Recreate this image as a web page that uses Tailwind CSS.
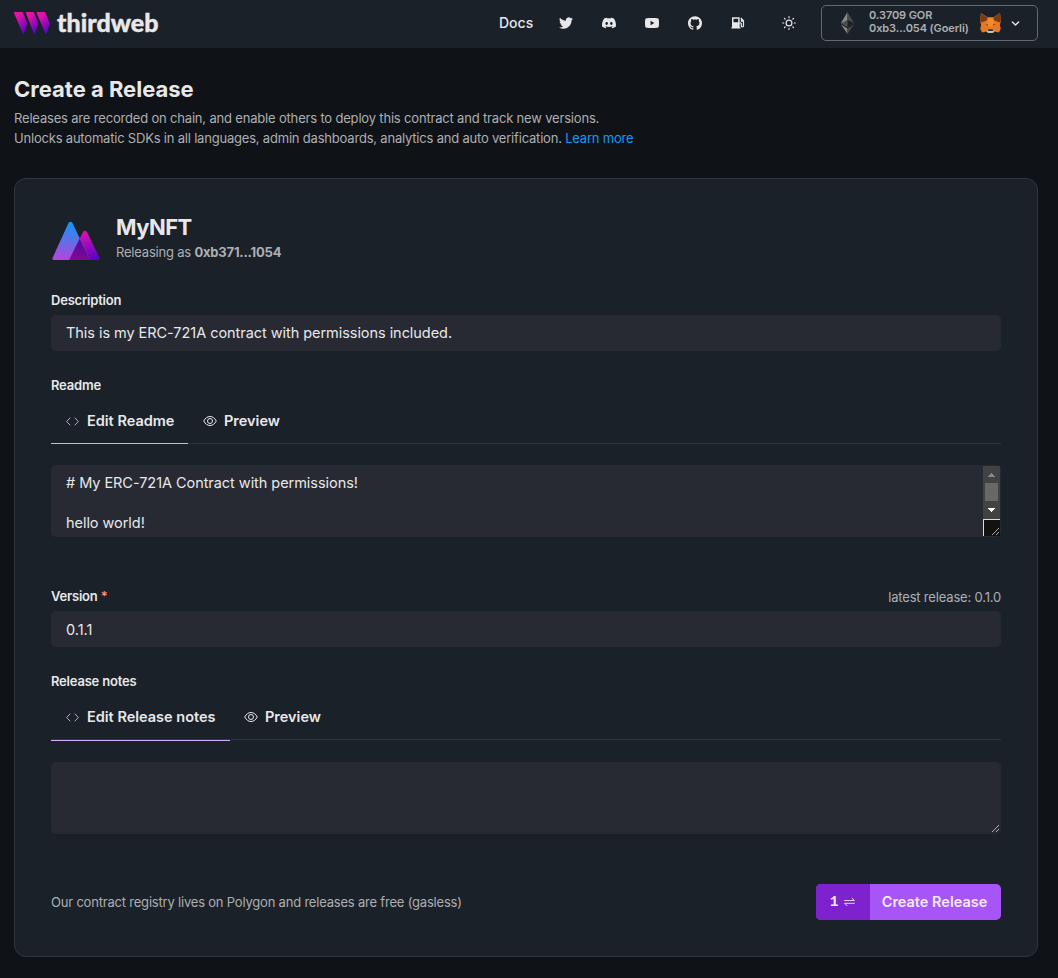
<!DOCTYPE html>
<html lang="en">
<head>
<meta charset="utf-8">
<title>Create a Release | thirdweb</title>
<script src="https://cdn.jsdelivr.net/npm/@tailwindcss/browser@4"></script>
</head>
<body class="h-[978px] overflow-hidden bg-[#0f1318] font-[Inter,sans-serif] text-[#e8e8ea]">
<header class="flex h-12 items-center bg-[#1b2129] pl-[14px] pr-5">
  <div class="flex items-center gap-[7px] pb-[2px]">
    <svg class="h-[22px] w-9" viewBox="0 0 36 22">
      <defs><linearGradient id="logo" x1="0" y1="0" x2=".6" y2="1"><stop offset="0" stop-color="#f213a4"/><stop offset=".3" stop-color="#e012a6"/><stop offset="1" stop-color="#5a04c4"/></linearGradient></defs>
      <path fill="url(#logo)" d="M1 0H7.800Q8.800 0 9.200 1L13.200 11.200Q13.500 12 13.200 12.800L10.200 21Q9.500 22.500 8.700 21L.1 1.300Q-.3 0 1 0Z"/>
      <path fill="url(#logo)" d="M13 0H18.800Q19.800 0 20.200 1L24.200 11.200Q24.500 12 24.200 12.800L21.200 21Q20.500 22.500 19.700 21L12 1.300Q11.500 0 13 0Z"/>
      <path fill="url(#logo)" d="M23.800 0H30.200Q31.200 0 31.600 1L35.700 11.200Q36 12 35.700 12.800L32.700 21Q32 22.500 31.200 21L22.700 1.300Q22.300 0 23.800 0Z"/>
    </svg>
    <span class="w-[102px] whitespace-nowrap pb-[2px] font-[Lato,sans-serif] text-[25px] font-black leading-6 tracking-[0.05px] [-webkit-text-stroke:0.4px_#e8e8ea]">thirdweb</span>
  </div>
  <nav class="ml-auto flex items-center pb-[2px]">
    <a class="mr-[26px] w-[34px] whitespace-nowrap text-[14px] font-medium leading-5">Docs</a>
    <div class="flex items-center gap-[29px]">
      <svg class="size-[14px]" viewBox="0 0 24 24" fill="currentColor"><path d="M23.953 4.570a10 10 0 01-2.825.775 4.958 4.958 0 002.163-2.723c-.951.555-2.005.959-3.127 1.184a4.920 4.920 0 00-8.384 4.482C7.690 8.095 4.067 6.130 1.640 3.162a4.822 4.822 0 00-.666 2.475c0 1.710.870 3.213 2.188 4.096a4.904 4.904 0 01-2.228-.616v.060a4.923 4.923 0 003.946 4.827 4.996 4.996 0 01-2.212.085 4.936 4.936 0 004.604 3.417 9.867 9.867 0 01-6.102 2.105c-.390 0-.779-.023-1.170-.067a13.995 13.995 0 007.557 2.209c9.053 0 13.998-7.496 13.998-13.985 0-.210 0-.420-.015-.630A9.935 9.935 0 0024 4.590z"/></svg>
      <svg class="size-[14px]" viewBox="0 0 24 24" fill="currentColor"><path d="M20.317 4.370a19.800 19.800 0 00-4.885-1.515.074.074 0 00-.079.037c-.210.375-.444.865-.608 1.250a18.300 18.300 0 00-5.487 0 12.600 12.600 0 00-.617-1.250.077.077 0 00-.079-.037A19.700 19.700 0 003.677 4.370a.070.070 0 00-.032.028C.533 9.046-.319 13.580.099 18.058a.082.082 0 00.031.056 19.900 19.900 0 005.993 3.030.078.078 0 00.084-.028c.462-.630.873-1.295 1.226-1.994a.076.076 0 00-.042-.106 13.100 13.100 0 01-1.872-.892.077.077 0 01-.008-.128c.126-.094.252-.192.372-.291a.074.074 0 01.078-.011c3.928 1.793 8.180 1.793 12.061 0a.074.074 0 01.079.010c.120.098.246.198.373.292a.077.077 0 01-.006.127c-.598.350-1.220.645-1.873.892a.077.077 0 00-.041.107c.360.698.772 1.363 1.225 1.993a.076.076 0 00.084.029 19.800 19.800 0 006.002-3.030.077.077 0 00.032-.055c.500-5.177-.838-9.674-3.549-13.660a.061.061 0 00-.031-.029zM8.020 15.331c-1.183 0-2.157-1.086-2.157-2.419s.955-2.419 2.157-2.419c1.210 0 2.175 1.095 2.156 2.419 0 1.333-.955 2.419-2.156 2.419zm7.975 0c-1.183 0-2.157-1.086-2.157-2.419s.955-2.419 2.157-2.419c1.210 0 2.175 1.095 2.156 2.419 0 1.333-.946 2.419-2.156 2.419z"/></svg>
      <svg class="size-[14px]" viewBox="0 0 24 24" fill="currentColor"><path fill-rule="evenodd" d="M12 3.500c-4 0-8 .2-9.400.5C1.200 4.300.5 5.100.3 6.500-.1 9-.1 15 .3 17.500c.2 1.400.9 2.200 2.300 2.500 1.400.3 5.400.5 9.400.5s8-.2 9.400-.5c1.400-.3 2.100-1.100 2.300-2.500.4-2.500.4-8.500 0-11-.2-1.400-.9-2.200-2.300-2.500-1.400-.3-5.400-.5-9.400-.5zM9.500 8.300 16 12l-6.500 3.700z"/></svg>
      <svg class="size-[14px]" viewBox="0 0 24 24" fill="currentColor"><path d="M12 .297c-6.630 0-12 5.373-12 12 0 5.303 3.438 9.800 8.205 11.385.6.113.82-.258.82-.577 0-.285-.010-1.040-.015-2.040-3.338.724-4.042-1.610-4.042-1.610C4.422 18.070 3.633 17.700 3.633 17.700c-1.087-.744.084-.729.084-.729 1.205.084 1.838 1.236 1.838 1.236 1.070 1.835 2.809 1.305 3.495.998.108-.776.417-1.305.760-1.605-2.665-.3-5.466-1.332-5.466-5.930 0-1.310.465-2.380 1.235-3.220-.135-.303-.540-1.523.105-3.176 0 0 1.005-.322 3.300 1.230.960-.267 1.980-.399 3-.405 1.020.006 2.040.138 3 .405 2.280-1.552 3.285-1.230 3.285-1.230.645 1.653.240 2.873.120 3.176.765.840 1.230 1.910 1.230 3.220 0 4.610-2.805 5.625-5.475 5.920.420.360.810 1.096.810 2.220 0 1.606-.015 2.896-.015 3.286 0 .315.210.690.825.570C20.565 22.092 24 17.592 24 12.297c0-6.627-5.373-12-12-12"/></svg>
      <svg class="size-[14px]" viewBox="0 0 14 14"><path fill="currentColor" fill-rule="evenodd" d="M1.500 1.300h6.700q.5 0 .5.500v9.400h.8v1.400H.400v-1.400H1V1.800q0-.5.500-.5zM2.500 2.800v3.400h4.700V2.800z"/><path fill="none" stroke="currentColor" stroke-width="1.200" d="M8.500 6.800h.8q1 0 1 1v2q0 1 1.100 1t1.100-1V4.800L9.800 1.900M10.500 3v2.200h2"/></svg>
    </div>
    <svg class="ml-[37px] mr-[25px] size-[14px]" viewBox="0 0 14 14" fill="none" stroke="currentColor" stroke-width="1.200" stroke-linecap="round"><circle cx="7" cy="7" r="2.900"/><path d="M7 .7v1M7 12.300v1M.7 7h1M12.300 7h1M2.500 2.500l.7.7M10.800 10.800l.7.7M2.500 11.500l.7-.7M10.800 3.200l.7-.7"/></svg>
  </nav>
  <button class="mb-[2px] flex h-9 w-[217px] items-center rounded-[5px] border border-[#65696f] text-left">
    <svg class="ml-[19px] h-[22px] w-[13px]" viewBox="0 0 13 22"><path fill="#8b8b8b" d="M0 11 6.500 0v14.700z"/><path fill="#4a4a4a" d="M13 11 6.500 0v14.700z"/><path fill="#505050" d="M0 11l6.500-3v6.700z"/><path fill="#202020" d="M13 11 6.500 8v6.700z"/><path fill="#858585" d="M0 12.600 6.500 22v-5.600z"/><path fill="#454545" d="M13 12.600 6.500 22v-5.600z"/></svg>
    <span class="ml-[15px] w-[100px] whitespace-nowrap pb-[2px] text-[11px] font-semibold leading-[13px] tracking-[-0.1px] text-[#adafb2]">0.3709 GOR<br>0xb3...054 (Goerli)</span>
    <svg class="ml-[11px] h-5 w-[21px]" viewBox="0 0 21 20"><path fill="#e97920" d="M1 0l7 4.600h5L20 0l1 7.200-1.200 5 1 3.200-1.800 4-4.400-1-2 1.600H8.400l-2-1.600-4.400 1-1.800-4 1-3.200L0 7.200z"/><path fill="#763d16" d="M1 0l7 5-1.200 2.600-5.300 2L0 7.200zM20 0l-7 5 1.200 2.600 5.300 2L21 7.200z"/><path fill="#f48b25" d="M8 4.600h5l1 4-1 5H8l-1-5z"/><path fill="#273645" d="M5.300 11l2.500.5.2 1.200zM15.700 11l-2.500.5-.2 1.200zM8.400 16.200h4.200l.5 1.800H7.900z"/><path fill="#cfbfb1" d="M6.300 17l1.600.9h5.200l1.600-.9-.5 1.700L12.500 20h-4l-1.700-1.300z"/></svg>
    <svg class="ml-[10px] size-[9px]" viewBox="0 0 9 9" fill="none" stroke="currentColor" stroke-width="1.400" stroke-linecap="round" stroke-linejoin="round"><path d="M1.400 3l3.100 3 3.100-3"/></svg>
  </button>
</header>

<main class="pl-[14px] pr-5">
  <h1 class="pt-[27px] text-[22px] font-bold leading-7">Create a Release</h1>
  <p class="mt-[5px] whitespace-nowrap text-[13px] leading-5 tracking-[-0.2px] text-[#adafb2]"><span class="tracking-[-0.18px]">Releases are recorded on chain, and enable others to deploy this contract and track new versions.</span><br><span>Unlocks automatic SDKs in all languages, admin dashboards, analytics and auto verification.</span> <a class="text-[#1499f5]">Learn more</a></p>

  <section class="mt-[30px] h-[779px] rounded-xl border border-[#30363e] bg-[#1b2129] px-9 pt-[34px]">
    <div class="flex h-[52px] items-start">
      <svg class="ml-[1px] mt-[8px] h-10 w-12" viewBox="0 0 48 40">
        <defs>
          <linearGradient id="peak" x1=".5" y1="0" x2=".4" y2="1"><stop offset="0" stop-color="#0c98f4"/><stop offset="1" stop-color="#b346dc"/></linearGradient>
          <linearGradient id="hill" x1=".3" y1="0" x2=".8" y2="1"><stop offset="0" stop-color="#e913aa"/><stop offset="1" stop-color="#5904c6"/></linearGradient>
          <linearGradient id="fold" x1=".5" y1="0" x2=".2" y2="1"><stop offset="0" stop-color="#52099c"/><stop offset="1" stop-color="#850894"/></linearGradient>
        </defs>
        <path fill="url(#hill)" d="M17 39 31 11Q33 8.500 35 11L47.600 37Q48 39 46 39Z"/>
        <path fill="url(#peak)" d="M2 39Q0 39 .5 37L16.500 2Q18.500-.7 20.500 2L38 39Z"/>
        <path fill="url(#fold)" d="M17 39 27.700 17.500 38 39Z"/>
      </svg>
      <div class="ml-4">
        <h2 class="text-[22px] font-bold leading-7 tracking-[-0.55px]">MyNFT</h2>
        <p class="mt-[1px] whitespace-nowrap text-[13px] leading-5 tracking-[-0.2px] text-[#adafb2]">Releasing as <b>0xb371...1054</b></p>
      </div>
    </div>

    <label class="mt-[25px] block text-[13px] font-semibold leading-5 tracking-[-0.2px]">Description</label>
    <div class="mt-[5px] flex h-9 items-center rounded-[5px] bg-[#272a33] px-[15px] text-[14.500px] tracking-[-0.05px]"><span class="whitespace-nowrap">This is my ERC-721A contract with permissions included.</span></div>

    <label class="mt-[24px] block text-[13px] font-semibold leading-5 tracking-[-0.2px]">Readme</label>
    <div class="mt-[4px] flex h-[45px] border-b border-[#30363e] text-[14.500px] font-semibold">
      <div class="flex h-[45px] w-[137px] items-center border-b border-[#d0adfa] px-[15px]">
        <svg class="mr-[8px] size-[13px] shrink-0" viewBox="0 0 13 13" fill="none" stroke="#c39af0" stroke-linecap="round" stroke-linejoin="round"><path d="M4 3 .6 6.500 4 10M9 3l3.400 3.500L9 10"/></svg><span class="whitespace-nowrap">Edit Readme</span>
      </div>
      <div class="flex items-center px-[15px]">
        <svg class="mr-[7px] h-[14px] w-[14px]" viewBox="0 0 14 14" fill="none" stroke="currentColor"><path d="M.7 7C2.300 4 4.500 2.500 7 2.500S11.700 4 13.300 7C11.700 10 9.500 11.500 7 11.500S2.300 10 .7 7Z"/><circle cx="7" cy="7" r="2.500"/></svg><span class="whitespace-nowrap">Preview</span>
      </div>
    </div>
    <div class="mt-[21px] flex h-[72px] justify-between rounded-[5px] bg-[#272a33] py-px pl-[15px] pr-px text-[14.500px] leading-5 tracking-[-0.05px]">
      <p class="whitespace-nowrap pt-[7px]"><span># My ERC-721A Contract with permissions!</span><br><br><span>hello world!</span></p>
      <div class="h-[70px] w-[17px] bg-[#424242]">
        <svg class="block h-[70px] w-[17px]" viewBox="0 0 17 70" shape-rendering="crispEdges"><path fill="#878787" d="M8 7h1v1h1v1h1v1h1v1H5v-1h1V9h1V8h1z"/><path fill="#686868" d="M2 17h13v18H2z"/><path fill="#fff" d="M5 42h7v1h-1v1h-1v1H9v1H8v-1H7v-1H6v-1H5z"/><path fill="#dcdcdc" d="M0 53h17v17H0z"/><path fill="#121212" d="M1 54h16v16H1z"/><path stroke="#d0d0d0" stroke-width=".8" shape-rendering="auto" d="M9 69l7-7M13 69l3-3"/></svg>
      </div>
    </div>

    <div class="mt-[49px] flex h-5 items-center justify-between">
      <label class="text-[13px] font-semibold leading-5 tracking-[-0.2px]">Version <span class="text-[#fa8f8f]">*</span></label>
      <span class="whitespace-nowrap pt-[2px] text-[13px] leading-5 tracking-[-0.18px] text-[#adafb2]">latest release: 0.1.0</span>
    </div>
    <div class="mt-[5px] flex h-9 items-center rounded-[5px] bg-[#272a33] px-[15px] pt-[2px] text-[14.500px]"><span>0.1.1</span></div>

    <label class="mt-[24px] block text-[13px] font-semibold leading-5 tracking-[-0.2px]">Release notes</label>
    <div class="mt-[4px] flex h-[45px] border-b border-[#30363e] text-[14.500px] font-semibold">
      <div class="flex h-[46px] w-[179px] items-center border-b border-[#d0adfa] px-[15px] pb-px">
        <svg class="mr-[8px] size-[13px] shrink-0" viewBox="0 0 13 13" fill="none" stroke="#c39af0" stroke-linecap="round" stroke-linejoin="round"><path d="M4 3 .6 6.500 4 10M9 3l3.400 3.500L9 10"/></svg><span class="whitespace-nowrap">Edit Release notes</span>
      </div>
      <div class="flex items-center px-[14px]">
        <svg class="mr-[7px] h-[14px] w-[14px]" viewBox="0 0 14 14" fill="none" stroke="currentColor"><path d="M.7 7C2.300 4 4.500 2.500 7 2.500S11.700 4 13.300 7C11.700 10 9.500 11.500 7 11.500S2.300 10 .7 7Z"/><circle cx="7" cy="7" r="2.500"/></svg><span class="whitespace-nowrap">Preview</span>
      </div>
    </div>
    <div class="mt-[22px] flex h-[72px] items-end justify-end rounded-[5px] bg-[#272a33] p-px">
      <svg class="size-[10px]" viewBox="0 0 10 10" stroke="#d0d0d0" stroke-width=".8"><path d="M2 9l7-7M6 9l3-3"/></svg>
    </div>

    <div class="mt-[50px] flex h-9 items-center justify-between">
      <p class="whitespace-nowrap pb-px text-[13px] leading-5 tracking-[-0.2px] text-[#adafb2]">Our contract registry lives on Polygon and releases are free (gasless)</p>
      <button class="flex h-9 w-[185px] overflow-hidden rounded-[5px] bg-[#a855f7] text-[#f2eafa]">
        <span class="flex h-9 w-[54px] items-center bg-[#7e22ce] pl-[14px] font-['Liberation_Mono',monospace] text-[14px] font-bold"><span class="pt-px">1</span>
          <svg class="ml-[6px] h-[10px] w-[11px]" viewBox="0 0 11 10" fill="none" stroke="currentColor" stroke-width=".9" stroke-linecap="round" stroke-linejoin="round"><path d="M.6 3.500h9.800L8 1.200M10.400 6.300H.6L3 8.700"/></svg>
        </span>
        <span class="w-[129px] text-center text-[14.500px] font-semibold leading-9">Create Release</span>
      </button>
    </div>
  </section>
</main>
</body>
</html>
